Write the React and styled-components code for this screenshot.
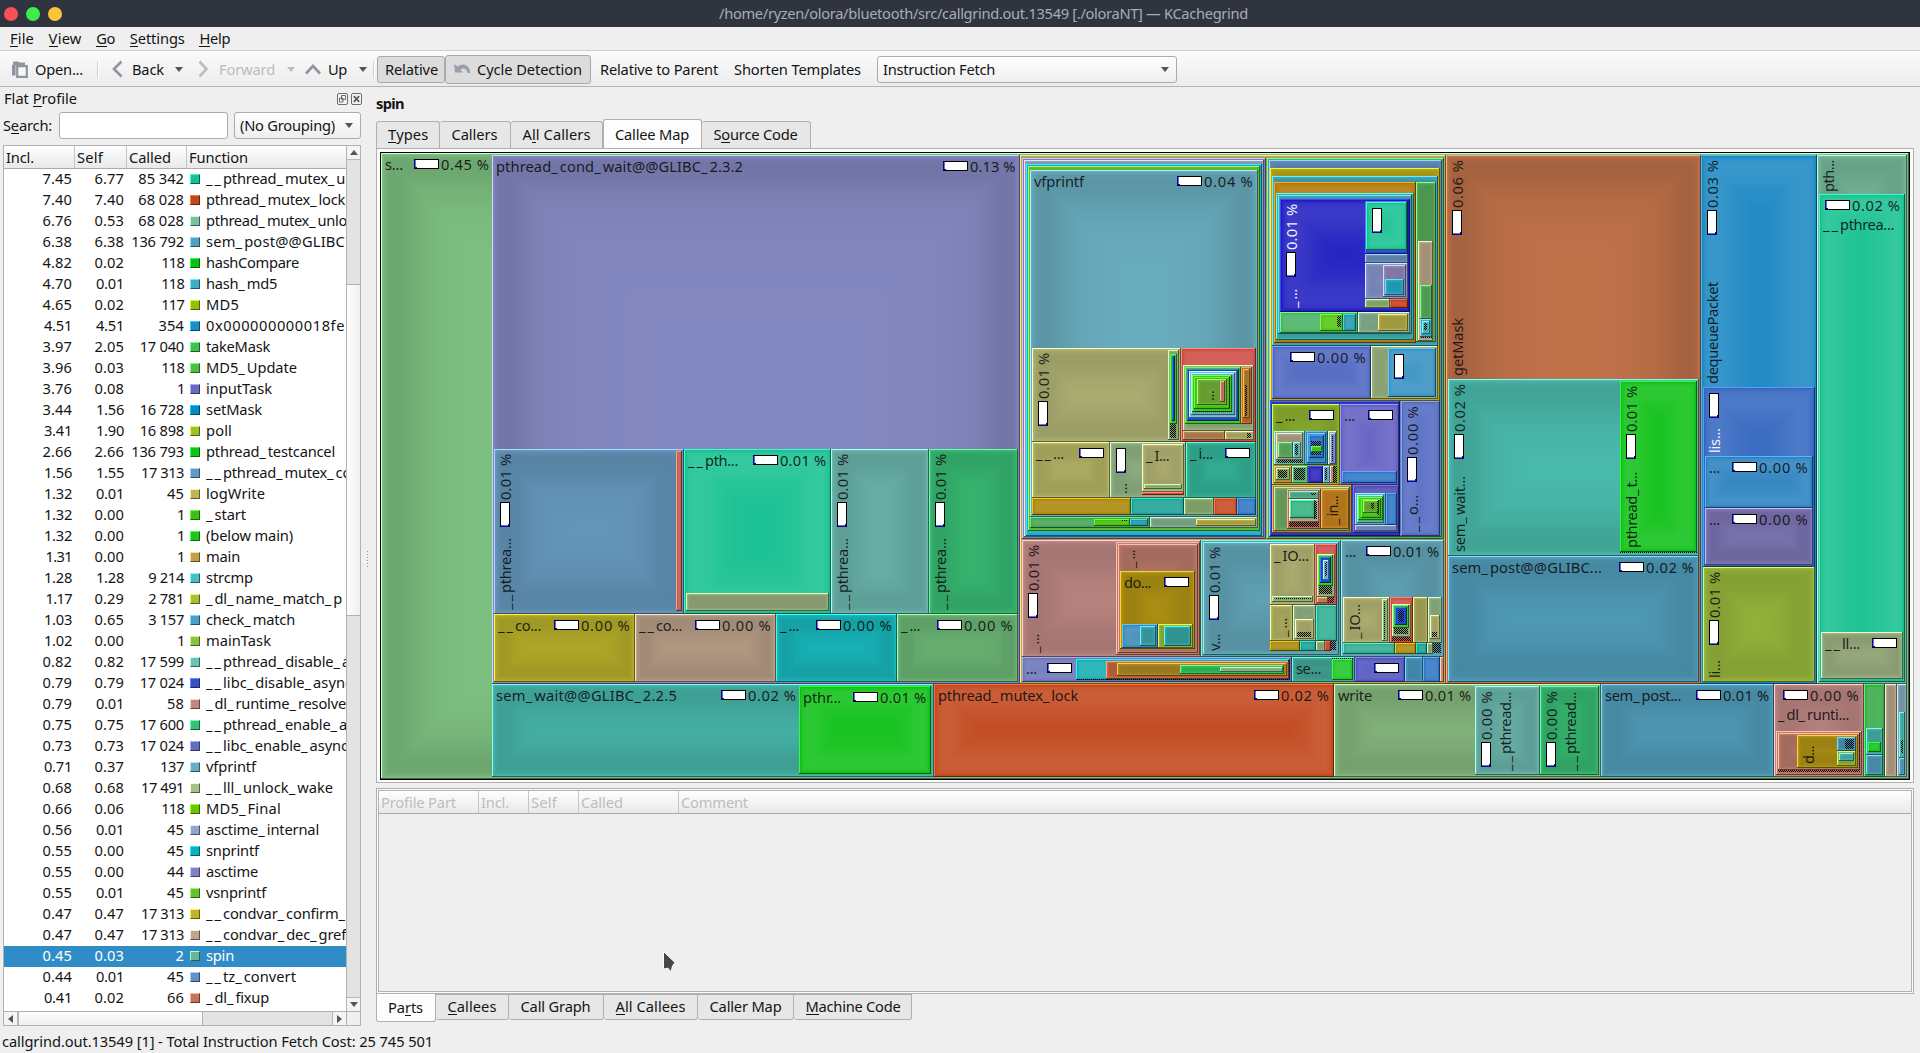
import React from 'react';
import styled, { createGlobalStyle, css } from 'styled-components';

const FONT = '"Noto Sans", "Open Sans", sans-serif';
const SIZE = 14.67;

const GlobalStyle = createGlobalStyle`
  * { box-sizing: border-box; }
  body { margin: 0; background: #efefef; overflow: hidden; }
  #root { font-family: ${FONT}; font-size: ${SIZE}px; color: #141414; }
`;

/* ---------- text with a known set width ---------- */

const UNDERSCORE_GAP = 2;
const ruler = document.createElement('canvas').getContext('2d');
const spacingFor = (text, width, weight = 400) => {
  ruler.font = `${weight} ${SIZE}px ${FONT}`;
  const scores = (text.match(/_/g) || []).length;
  const others = text.length - scores;
  return (width - ruler.measureText(text).width - scores * UNDERSCORE_GAP) / others;
};
const pieces = (text) => text.split(/(_+)/).filter(Boolean);

const Run = styled.span`
  display: inline-block;
  white-space: pre;
  font-weight: ${(p) => p.$weight || 400};
  flex: none;
`;
const Scores = styled.span`letter-spacing: ${UNDERSCORE_GAP}px;`;
const Mnemonic = styled.span`
  box-shadow: inset 0 -1px 0 currentColor;
  display: inline-block;
  line-height: 18px;
`;

const withScores = (text) => pieces(text).map((part, i) => (
  part[0] === '_' ? <Scores key={i}>{part}</Scores> : part
));

function Fit({ text, w, weight }) {
  const at = text.indexOf('&');
  const plain = text.replace('&', '');
  const style = { letterSpacing: `${spacingFor(plain, w, weight).toFixed(3)}px`, width: w + 1 };
  return (
    <Run $weight={weight} style={style}>
      {at < 0 ? withScores(plain) : (
        <>{plain.slice(0, at)}<Mnemonic>{plain[at]}</Mnemonic>{plain.slice(at + 1)}</>
      )}
    </Run>
  );
}

/* ---------- window chrome ---------- */

const Window = styled.div`
  width: 1920px; height: 1053px;
  display: flex; flex-direction: column;
  background: #efefef;
`;
const TitleBar = styled.header`
  height: 27px; flex: none;
  display: grid; grid-template-columns: 719px 1fr;
  align-items: center;
  background: #2f343f; color: #a6adbb;
  line-height: 27px;
`;
const Lights = styled.div`display: flex; gap: 8px; padding-left: 4px;`;
const Light = styled.i`
  width: 14px; height: 14px; border-radius: 50%;
  background: ${(p) => p.$color};
`;
const MenuBar = styled.nav`
  height: 24px; flex: none;
  display: flex; gap: 13.6px; padding-left: 10px;
  line-height: 23px;
  border-bottom: 1px solid #d0d0d0;
`;
const ToolBar = styled.div`
  height: 36px; flex: none; padding-top: 1px;
  display: flex; align-items: center;
  background: linear-gradient(#fbfbfb, #ececec);
  border-bottom: 1px solid #b4b4b4;
`;
const Tool = styled.div`
  display: flex; align-items: center; flex: none;
  width: ${(p) => p.$w}px; height: 28px; line-height: 28px;
  padding-left: ${(p) => p.$pad || 0}px;
  gap: ${(p) => p.$gap || 0}px;
  color: ${(p) => (p.$off ? '#bcbcbc' : '#141414')};
  ${(p) => p.$on && css`
    height: ${p.$h}px;
    background: #dcdcdc; border: 1px solid #a9a9a9; border-radius: 3px;
    line-height: 26px;
  `}
`;
const Separator = styled.i`
  width: 1px; height: 17px; background: #cfcfcf; flex: none;
  box-shadow: 1px 0 0 #fff;
  margin-right: ${(p) => p.$after}px;
`;
const Combo = styled.div`
  width: ${(p) => p.$w}px; height: 27px; flex: none;
  display: flex; align-items: center; justify-content: space-between;
  padding: 0 7px 0 5px;
  line-height: 25px;
  border: 1px solid #ababab; border-radius: 3px;
  background: linear-gradient(#fefefe, #efefef);
`;

const Arrow = styled.i`
  width: 0; height: 0; flex: none;
  margin-left: ${(p) => p.$shift || 0}px;
  border: 4px solid transparent;
  ${(p) => p.$dir === 'up' && css`border-bottom: 5px solid #555; border-top: 0;`}
  ${(p) => (!p.$dir || p.$dir === 'down') && css`border-top: 5px solid ${p.$color || '#555'}; border-bottom: 0;`}
  ${(p) => p.$dir === 'left' && css`border-right: 5px solid #555; border-left: 0;`}
  ${(p) => p.$dir === 'right' && css`border-left: 5px solid #555; border-right: 0;`}
`;

const Chevron = ({ d, w, h, color = '#9094a0' }) => (
  <svg width={w} height={h} viewBox={`0 0 ${w} ${h}`}>
    <path d={d} fill="none" stroke={color} strokeWidth="2.6" />
  </svg>
);
const OpenIcon = () => (
  <svg width="17" height="17" viewBox="0 0 17 17">
    <path d="M1 1.5 L1.6 .5 H6.5 L7.2 1.5 H13 V4 H1Z" fill="#9094a0" />
    <path d="M0 4H3.6V14.5H0Z" fill="#9094a0" />
    <path d="M5.2 5.2H14.8V15.8H5.2Z" fill="#f6f6f6" stroke="#9094a0" strokeWidth="2.2" />
  </svg>
);
const CycleIcon = () => (
  <svg width="17" height="12" viewBox="0 0 17 12">
    <path d="M0 1 L1 9.5 H9 L6.3 6.6 C9 4.6 12.5 5 13.6 10 H16.2 C16.2 3 10 -1.5 3.6 3.6 Z" fill="#9aa0aa" />
  </svg>
);
const FloatIcon = () => (
  <svg width="11" height="12" viewBox="0 0 11 12">
    <rect x=".5" y=".5" width="10" height="11" rx="1.5" fill="#f4f4f4" stroke="#6d6d6d" />
    <path d="M4.5 2.5H8.5V6.5H4.5Z M2.5 5H6V9H2.5Z" fill="none" stroke="#6d6d6d" />
  </svg>
);
const CloseIcon = () => (
  <svg width="11" height="12" viewBox="0 0 11 12">
    <rect x=".5" y=".5" width="10" height="11" rx="1.5" fill="#f4f4f4" stroke="#6d6d6d" />
    <path d="M2.8 3.2L8.2 8.8M8.2 3.2L2.8 8.8" stroke="#5a5a5a" strokeWidth="1.8" />
  </svg>
);

const Workspace = styled.main`
  flex: 1; min-height: 0;
  display: grid; grid-template-columns: 362px 14px 1538px;
  grid-template-rows: 940px;
`;
const StatusBar = styled.footer`
  height: 26px; flex: none; padding-left: 2px; line-height: 29px;
`;

/* ---------- flat profile dock ---------- */

const Dock = styled.section`display: flex; flex-direction: column; padding-left: 3px;`;
const DockTitle = styled.div`
  height: 25px; display: flex; align-items: center; gap: 3px; padding: 0 0 2px 1px;
  line-height: 23px;
  & > :first-child { margin-right: auto; }
`;
const SearchRow = styled.div`
  height: 33px; display: flex; align-items: flex-start; line-height: 27px;
`;
const SearchInput = styled.input`
  width: 169px; height: 27px; margin: 0 6px 0 6px;
  border: 1px solid #ababab; border-radius: 3px; background: #fff;
`;
const ProfileView = styled.div`
  width: 358px; height: 881px;
  display: grid; grid-template-columns: 342px 14px; grid-template-rows: 865px 14px;
  border: 1px solid #b2b2b2; background: #fff;
`;
const ProfileTable = styled.div`overflow: hidden;`;
const HeaderRow = styled.div`
  display: flex; height: 23px; line-height: 22px;
  background: linear-gradient(#fefefe, #e9e9e9);
  border-bottom: 1px solid #ababab;
  color: ${(p) => (p.$off ? '#bdbdbd' : '#141414')};
`;
const HeaderCell = styled.div`
  width: ${(p) => (p.$w ? `${p.$w}px` : 'auto')};
  flex: ${(p) => (p.$w ? 'none' : 1)};
  padding-left: 2px;
  border-right: ${(p) => (p.$w ? '1px solid #c6c6c6' : '0')};
`;
const Row = styled.div`
  display: grid; grid-template-columns: 68px 52px 60px 6px 10px 6px 1fr;
  align-items: start;
  height: 21px; line-height: 19px; overflow: hidden;
  background: ${(p) => (p.$selected ? '#308cc6' : 'transparent')};
  color: ${(p) => (p.$selected ? '#fff' : '#141414')};
`;
const Num = styled.div`text-align: right; display: flex; justify-content: flex-end; white-space: pre;`;
const Swatch = styled.i`
  grid-column: 5; width: 10px; height: 10px; margin-top: 5px;
  background: ${(p) => p.$color};
  border: 1px solid; border-color: ${(p) => `${p.$hi} ${p.$lo} ${p.$lo} ${p.$hi}`};
`;
const FnName = styled.div`grid-column: 7; overflow: hidden; white-space: pre; height: 21px;`;

const VScroll = styled.div`
  display: grid; grid-template-rows: 14px 124px 332px 381px 14px;
  border-left: 1px solid #b2b2b2; background: #e3e3e3;
`;
const HScroll = styled.div`
  display: grid; grid-template-columns: 14px 185px 129px 14px;
  border-top: 1px solid #b2b2b2; background: #e3e3e3;
`;
const ScrollButton = styled.div`
  display: flex; align-items: center; justify-content: center;
  background: #f4f4f4;
  border: 0 solid #b9b9b9;
  border-width: ${(p) => p.$edge};
`;
const Thumb = styled.div`
  background: linear-gradient(${(p) => (p.$vertical ? '90deg' : '180deg')}, #fdfdfd, #f0f0f0);
  border: 0 solid #b2b2b2;
  border-width: ${(p) => (p.$vertical ? '1px 0' : '0 1px')};
`;
const Corner = styled.div`background: #efefef; border: 1px solid #b2b2b2; border-width: 1px 0 0 1px;`;

const Splitter = styled.div`
  padding: 464px 0 0 5px;
  i { display: block; width: 1px; height: 1px; margin-bottom: 2px; background: #999; }
`;

/* ---------- right side ---------- */

const Views = styled.section`display: flex; flex-direction: column;`;
const FunctionTitle = styled.h1`
  margin: 0; height: 32px; line-height: 33px; font-size: inherit; font-weight: 700;
`;
const Tabs = styled.div`
  display: flex; height: 29px; flex: none;
  align-items: ${(p) => (p.$bottom ? 'flex-start' : 'flex-end')};
`;
const Tab = styled.div`
  width: ${(p) => p.$w}px; flex: none;
  height: ${(p) => (p.$active ? 28 : 26)}px;
  padding-left: ${(p) => (p.$active || p.$first ? 11 : 11.5)}px;
  border: 1px solid #b0b0b0; border-left-width: ${(p) => (p.$active || p.$first ? 1 : 0)}px;
  background: ${(p) => (p.$active ? '#fdfdfd' : '#e7e7e7')};
  ${(p) => (p.$bottom
    ? css`border-top-width: ${p.$active ? 0 : 1}px; border-radius: 0 0 3px 3px; line-height: ${p.$active ? 27 : 23}px;`
    : css`border-bottom-width: ${p.$active ? 0 : 1}px; border-radius: 3px 3px 0 0; line-height: ${p.$active ? 29 : 25}px;
      ${p.$active && 'margin-bottom: -1px; height: 30px;'}
      ${!p.$active && 'height: 27px; border-bottom-width: 0;'}`)}
`;
const TopPanel = styled.div`
  height: 635px; padding: 3px; flex: none;
  border: 1px solid #b0b0b0;
  background: #fbfbfb;
`;
const BottomPanel = styled.div`
  height: 206px; margin-top: 5px; padding: 1px; flex: none;
  border: 1px solid #b0b0b0; background: #fbfbfb;
`;
const PartsTable = styled.div`height: 202px; border: 1px solid #b2b2b2; background: #efefef;`;

const Pointer = styled.svg`position: absolute; left: 661px; top: 950px;`;

/* ---------- colour helpers ---------- */

const rgb = (hex) => [1, 3, 5].map((i) => parseInt(hex.slice(i, i + 2), 16));
const toCss = (c) => `rgb(${c.map((v) => Math.max(0, Math.min(255, Math.round(v)))).join(',')})`;

const lighter = (hex) => {
  const c = rgb(hex);
  const max = Math.max(...c) || 1;
  const v = max * 1.5;
  if (v <= 255) return toCss(c.map((x) => x * 1.5));
  const sat = Math.max(0, 1 - Math.min(...c) / max - (v - 255) / 255);
  const oldSat = 1 - Math.min(...c) / max || 1;
  return toCss(c.map((x) => 255 * (1 - (1 - x / max) * (sat / oldSat))));
};
const darker = (hex) => toCss(rgb(hex).map((x) => x / 2));

const shades = (hex, w, h) => {
  const base = rgb(hex);
  const dark = (base[0] * 11 + base[1] * 16 + base[2] * 5) / 32 > 128;
  const diff = base.map((v) => (dark ? -v / 7 : (255 - v) / 7));
  const s = Math.min(w, h);
  let factor = 0.1; let forth = 0.7; let back1 = 0.9; let back2 = 0.97;
  if (s < 100) {
    forth -= (0.3 * (100 - s)) / 100;
    back1 -= (0.2 * (100 - s)) / 100;
    back2 -= (0.02 * (100 - s)) / 100;
  }
  const out = [];
  let phase = 0;
  for (let i = 0; i * 2 < s; i += 1) {
    const color = toCss(base.map((v, k) => v + factor * diff[k]));
    if (!out.length || out[out.length - 1].color !== color) out.push({ i, color });
    if (phase === 0) {
      factor = 1 - (1 - factor) * forth;
      if (factor >= 0.95) phase = 1;
    } else if (phase === 1) {
      factor = 1 - (1 - factor) / back1;
      if (factor <= 0.7) phase = 2;
    } else {
      factor *= back2;
      if (factor <= 0.01) break;
    }
  }
  return out;
};

/* ---------- callee tree map ---------- */

const MapSvg = styled.svg`display: block; background: #000;`;
const MapText = styled.text`
  font-family: ${FONT};
  font-size: ${SIZE}px;
  fill: ${(p) => (p.$light ? '#f4f4ff' : '#0c0c0c')};
  fill-opacity: ${(p) => (p.$light ? 1 : 0.88)};
  white-space: pre;
`;
const CostBox = styled.rect`fill: #fff; stroke: #000; stroke-width: 1px;`;

function MapLabel({ x, y, text, w, light }) {
  const gap = spacingFor(text, w);
  return (
    <MapText x={x} y={y} $light={light}>
      {pieces(text).map((part, i) => (
        <tspan key={i} style={{ letterSpacing: `${(part[0] === '_' ? UNDERSCORE_GAP : gap).toFixed(3)}px` }}>{part}</tspan>
      ))}
    </MapText>
  );
}

const pctWidth = (p) => ({ '0.00': 49, '0.04': 49, '0.01': 46, '0.13': 45 }[p] || 48);

function Labels({ box, o }) {
  const [x0, y0, x1, y1] = box;
  const right = o.v ? y0 : (o.lx || x1);
  const length = o.v ? (o.ly || y1) - y0 : right - x0;
  const pw = o.p ? pctWidth(o.p) : 0;
  const barAt = o.p ? length - 81 + (49 - pw) : length - 31;
  const transform = o.v ? `translate(${x0} ${o.ly || y1}) rotate(-90)` : `translate(${x0} ${y0})`;
  return (
    <g transform={transform}>
      {o.n && <MapLabel x={4} y={o.l2 ? 36 : 17} text={o.n} w={o.w} light={o.light} />}
      {(o.p || o.bar) && (
        <g>
          <CostBox x={barAt + 0.5} y={6.5} width={24} height={9} />
          <path d={`M${barAt + 1.5} 7V15`} stroke="#6a6af0" />
          <path d={`M${barAt + 1} 14.5h2M${barAt + 0.5} 6.5v9`} stroke="#0a0a78" />
        </g>
      )}
      {o.p && <MapLabel x={barAt + 27} y={17} text={`${o.p} %`} w={pw + 0.5} light={o.light} />}
    </g>
  );
}

function Cell({ box, color, o }) {
  const [x0, y0, x1, y1] = box;
  if (color === 'hatch') {
    return <rect x={x0} y={y0} width={x1 - x0} height={y1 - y0} fill="url(#dense)" />;
  }
  const w = x1 - x0; const h = y1 - y0;
  return (
    <g>
      <rect x={x0} y={y0} width={w} height={h} fill={lighter(color)} />
      <path d={`M${x1} ${y0}V${y1}H${x0}V${y1 - 1}H${x1 - 1}V${y0}Z`} fill={darker(color)} />
      {shades(color, w - 2, h - 2).map(({ i, color: c }) => (
        <rect key={i} x={x0 + 1 + i} y={y0 + 1 + i} width={Math.max(0, w - 2 - 2 * i)} height={Math.max(0, h - 2 - 2 * i)} fill={c} />
      ))}
      {o && <Labels box={box} o={o} />}
    </g>
  );
}

const H = 'hatch';
const CELLS = [
  [381, 153, 1909, 779, '#7ec182', { n: 's...', w: 18, p: '0.45', lx: 494 }],
  // pthread_cond_wait
  [492, 155, 1020, 684, '#8488c0', { n: 'pthread_cond_wait@@GLIBC_2.3.2', w: 247, p: '0.13' }],
  [494, 449, 684, 614, '#6699bf', { n: '__pthrea...', w: 72, p: '0.01', v: 1 }],
  [676, 451, 682, 611, '#c05f50'],
  [684, 449, 831, 614, '#14c090', { n: '__pth...', w: 50, p: '0.01' }],
  [686, 593, 829, 611, '#9cb080'],
  [831, 449, 929, 614, '#6cb8ae', { n: '__pthrea...', w: 72, p: '0.01', v: 1 }],
  [929, 449, 1018, 614, '#38bc74', { n: '__pthrea...', w: 72, p: '0.01', v: 1 }],
  [494, 614, 635, 682, '#b8b02a', { n: '__co...', w: 43, p: '0.00' }],
  [635, 614, 776, 682, '#baa088', { n: '__co...', w: 43, p: '0.00' }],
  [776, 614, 897, 682, '#18babe', { n: '_...', w: 19, p: '0.00' }],
  [897, 614, 1018, 682, '#6cb876', { n: '_...', w: 19, p: '0.00' }],
  // sem_wait, pthread_mutex_lock
  [492, 684, 934, 777, '#48b8ac', { n: 'sem_wait@@GLIBC_2.2.5', w: 181, p: '0.02', lx: 801 }],
  [799, 686, 931, 774, '#0cc014', { n: 'pthr...', w: 38, p: '0.01' }],
  [934, 684, 1334, 777, '#c04418', { n: 'pthread_mutex_lock', w: 140, p: '0.02' }],
  // write
  [1334, 684, 1601, 777, '#88ba80', { n: 'write', w: 34, p: '0.01', lx: 1476 }],
  [1475, 686, 1540, 775, '#6cb8ae', { n: '__pthread...', w: 79, p: '0.00', v: 1, l2: 1 }],
  [1540, 686, 1599, 775, '#38bc74', { n: '__pthread...', w: 79, p: '0.00', v: 1, l2: 1 }],
  [1601, 684, 1774, 777, '#519ebc', { n: 'sem_post...', w: 76, p: '0.01' }],
  // _dl_runtime_resolve
  [1774, 684, 1864, 777, '#bf8884', { n: '_dl_runti...', w: 71, p: '0.00', l2: 1 }],
  [1776, 731, 1862, 775, '#c87c64'],
  [1778, 733, 1860, 770, '#bc7c6c'],
  [1778, 770, 1860, 772, H],
  [1859, 733, 1860, 772, H],
  [1797, 735, 1858, 768, '#b49614', { n: 'd...', w: 18, v: 1 }],
  [1837, 737, 1856, 751, '#489ac0'],
  [1845, 739, 1854, 749, H],
  [1837, 751, 1856, 766, '#98b834'],
  [1839, 753, 1854, 761, '#48b4b4'],
  [1864, 684, 1885, 777, '#35a845'],
  [1866, 728, 1883, 755, '#48b4a8'],
  [1868, 742, 1881, 752, '#10c418'],
  [1866, 755, 1883, 775, '#519ebc'],
  [1885, 684, 1897, 777, '#bca68c'],
  [1897, 684, 1907, 777, '#86a8b8'],
  [1899, 712, 1905, 758, '#48b8ac'],
  [1901, 740, 1903, 753, H],
  [1899, 758, 1905, 775, '#519ebc'],
  // getMask
  [1446, 155, 1701, 684, '#c0724a', { n: 'getMask', w: 58, p: '0.06', v: 1, ly: 380 }],
  [1448, 379, 1699, 556, '#4abdae', { n: 'sem_wait...', w: 76, p: '0.02', v: 1 }],
  [1620, 381, 1697, 552, '#0cc014', { n: 'pthread_t...', w: 76, p: '0.01', v: 1 }],
  [1620, 552, 1697, 553, H],
  [1448, 556, 1699, 682, '#519ebc', { n: 'sem_post@@GLIBC...', w: 150, p: '0.02' }],
  // dequeuePacket
  [1701, 155, 1817, 684, '#1886c2', { n: 'dequeuePacket', w: 102, p: '0.03', v: 1, ly: 388 }],
  [1703, 387, 1815, 567, '#3064bf', { n: 'lis...', w: 25, bar: 1, v: 1, ly: 457, light: 1 }],
  [1705, 456, 1813, 508, '#2880c0', { n: '...', w: 11, p: '0.00' }],
  [1705, 508, 1813, 565, '#8078b8', { n: '...', w: 11, p: '0.00' }],
  [1703, 567, 1815, 682, '#9aba3c', { n: 'li...', w: 18, p: '0.01', v: 1 }],
  // pthread_mutex_unlock
  [1817, 155, 1907, 684, '#78bc9e', { n: 'pth...', w: 32, v: 1, ly: 196 }],
  [1819, 194, 1905, 682, '#14c090', { n: '__pthrea...', w: 71, p: '0.02', l2: 1 }],
  [1821, 632, 1903, 679, '#a0b484', { n: '__ll...', w: 35, bar: 1 }],
  // logWrite group
  [1020, 155, 1446, 684, '#bca858'],
  [1022, 158, 1266, 539, '#8080bf'],
  [1024, 160, 1264, 537, '#8fa2c0'],
  [1026, 164, 1262, 536, '#11b0cc'],
  [1028, 166, 1260, 531, '#65bf35'],
  [1030, 170, 1258, 517, '#6aaec0', { n: 'vfprintf', w: 50, p: '0.04' }],
  [1032, 348, 1181, 442, '#b2b676', { p: '0.01', v: 1, ly: 442 }],
  [1168, 350, 1179, 440, '#90b078'],
  [1170, 354, 1177, 424, '#2cc41a'],
  [1172, 356, 1175, 421, '#1340b8'],
  [1170, 424, 1176, 438, H],
  [1181, 348, 1256, 442, '#cc4840'],
  [1183, 365, 1254, 431, '#98b880'],
  [1185, 367, 1241, 424, '#35c81c'],
  [1187, 369, 1239, 421, '#1040cc'],
  [1189, 371, 1237, 418, '#7cc0d8'],
  [1191, 373, 1235, 415, '#60b8c0'],
  [1192, 375, 1232, 412, '#3fce1e'],
  [1194, 377, 1230, 409, '#38c010'],
  [1194, 411, 1232, 412, H],
  [1229, 377, 1230, 409, H],
  [1197, 379, 1227, 405, '#74b438', { n: '...', w: 10.5, v: 1 }],
  [1220, 381, 1225, 402, '#c07860'],
  [1241, 367, 1252, 424, '#c8682f'],
  [1243, 369, 1250, 418, '#b08030'],
  [1245, 385, 1247, 416, H],
  [1183, 431, 1225, 440, '#b88858'],
  [1225, 431, 1254, 440, '#b8b470'],
  [1247, 433, 1251, 438, H],
  [1032, 442, 1110, 498, '#b8b868', { n: '__...', w: 28, bar: 1 }],
  [1110, 442, 1186, 498, '#94b888', { n: '...', w: 11, bar: 1, v: 1 }],
  [1142, 444, 1184, 492, '#b8b878', { n: '_I...', w: 23 }],
  [1144, 484, 1182, 489, '#90b878'],
  [1142, 492, 1184, 495, '#e03838'],
  [1186, 442, 1256, 498, '#34b89c', { n: '_i...', w: 23, bar: 1 }],
  [1032, 498, 1131, 515, '#a88404'],
  [1131, 498, 1184, 515, '#18a094'],
  [1184, 498, 1214, 515, '#90b478'],
  [1214, 498, 1237, 515, '#c44820'],
  [1237, 498, 1256, 515, '#2c74c4'],
  [1030, 517, 1150, 528, '#40a450'],
  [1094, 519, 1130, 526, '#44c008'],
  [1122, 520, 1128, 521, H],
  [1130, 519, 1148, 526, '#2098a8'],
  [1150, 517, 1258, 528, '#84b494'],
  [1196, 519, 1256, 526, '#b8b048'],
  // asctime / tz group
  [1267, 158, 1444, 539, '#46b468'],
  [1269, 160, 1442, 537, '#6090c0'],
  [1270, 168, 1440, 401, '#b8a81c'],
  [1272, 176, 1438, 346, '#40a8b8'],
  [1274, 182, 1416, 343, '#b47404'],
  [1276, 193, 1414, 340, '#38b0ac'],
  [1278, 195, 1412, 334, '#40a4b8'],
  [1280, 199, 1410, 312, '#1c1abf', { n: '_...', w: 19, p: '0.01', v: 1, light: 1 }],
  [1365, 201, 1408, 254, '#2040c8'],
  [1366, 202, 1407, 250, '#14c090', { bar: 1, v: 1 }],
  [1365, 254, 1408, 263, '#6890c0'],
  [1365, 263, 1408, 299, '#8898d0'],
  [1383, 265, 1406, 297, '#9488bc'],
  [1385, 279, 1404, 295, '#28acc8'],
  [1365, 299, 1390, 308, '#90b878'],
  [1390, 299, 1408, 308, '#c83c18'],
  [1280, 312, 1358, 333, '#44b060'],
  [1320, 314, 1343, 331, '#50c410'],
  [1337, 316, 1341, 327, H],
  [1343, 314, 1356, 331, '#2098a8'],
  [1358, 312, 1410, 333, '#8cb898'],
  [1378, 314, 1408, 331, '#b8b048'],
  [1416, 182, 1436, 342, '#58ae5c'],
  [1418, 241, 1433, 341, '#bca888'],
  [1420, 285, 1432, 319, '#58b05c'],
  [1420, 319, 1432, 337, '#48a8c0'],
  [1422, 321, 1430, 334, '#48c0c0'],
  [1424, 323, 1427, 330, H],
  [1420, 337, 1432, 338, H],
  [1272, 346, 1371, 399, '#4c64c0', { p: '0.00' }],
  [1371, 346, 1438, 399, '#a0b884'],
  [1388, 348, 1436, 397, '#3490c2', { bar: 1, v: 1 }],
  [1270, 401, 1400, 536, '#1c30c4'],
  [1272, 404, 1340, 485, '#90b430', { n: '_...', w: 19, bar: 1 }],
  [1274, 431, 1305, 465, '#6cbcac'],
  [1276, 433, 1303, 460, '#b8a888'],
  [1278, 442, 1293, 458, '#64b468'],
  [1293, 442, 1301, 458, '#58c0c0'],
  [1295, 444, 1298, 455, H],
  [1277, 460, 1303, 463, H],
  [1305, 431, 1328, 465, '#3088b8'],
  [1307, 433, 1326, 463, '#3c98d0'],
  [1309, 435, 1324, 458, '#2068c0'],
  [1311, 441, 1321, 455, H],
  [1311, 446, 1322, 452, '#40d018'],
  [1328, 431, 1337, 465, '#98b888'],
  [1330, 433, 1336, 464, '#7890d0'],
  [1332, 436, 1333, 462, H],
  [1274, 466, 1292, 483, '#c89040'],
  [1276, 468, 1290, 480, '#84b868'],
  [1278, 470, 1287, 478, H],
  [1292, 466, 1308, 483, '#64c084'],
  [1294, 468, 1305, 480, H],
  [1308, 466, 1323, 483, '#2820b8'],
  [1323, 466, 1330, 483, '#64b4d0'],
  [1325, 468, 1327, 480, H],
  [1330, 466, 1334, 483, '#d08078'],
  [1333, 466, 1337, 483, H],
  [1340, 404, 1399, 485, '#605cc0', { n: '...', w: 11, bar: 1 }],
  [1342, 471, 1397, 483, '#2c74c4'],
  [1272, 485, 1352, 533, '#c87430'],
  [1274, 487, 1350, 531, '#70b068'],
  [1287, 489, 1321, 529, '#c86c58'],
  [1289, 491, 1319, 499, '#54b898'],
  [1311, 493, 1316, 495, H],
  [1289, 499, 1319, 522, '#b8ac88'],
  [1290, 500, 1315, 518, '#30b07c'],
  [1314, 501, 1317, 519, H],
  [1289, 522, 1319, 527, H],
  [1321, 489, 1349, 529, '#cc8420', { n: '_in...', w: 29, v: 1 }],
  [1353, 485, 1399, 533, '#4c48b4'],
  [1355, 493, 1386, 525, '#50b8c8'],
  [1357, 495, 1384, 523, '#68b0a0'],
  [1358, 497, 1383, 520, '#38c820'],
  [1361, 499, 1381, 518, '#30c008'],
  [1363, 500, 1379, 513, '#70b438'],
  [1371, 503, 1374, 509, H],
  [1377, 500, 1379, 515, H],
  [1386, 493, 1397, 525, '#2c74c4'],
  [1355, 525, 1397, 531, '#7890c8'],
  [1401, 401, 1440, 536, '#5068c0', { n: '__o...', w: 37, p: '0.00', v: 1 }],
  // lower middle band
  [1022, 540, 1201, 657, '#bf8884', { n: '_...', w: 19, p: '0.01', v: 1 }],
  [1116, 542, 1200, 655, '#c87c64'],
  [1118, 544, 1198, 653, '#bc7c6c', { n: '_...', w: 18, v: 1, ly: 572 }],
  [1120, 571, 1195, 649, '#b49614', { n: 'do...', w: 27, bar: 1 }],
  [1122, 624, 1158, 648, '#3888b4'],
  [1140, 626, 1156, 646, '#40a8b4'],
  [1158, 624, 1193, 648, '#98b834'],
  [1164, 626, 1191, 646, '#38a8a8'],
  [1201, 540, 1341, 657, '#48b4a0'],
  [1203, 542, 1339, 655, '#64a8bc', { n: 'v...', w: 17, p: '0.01', v: 1 }],
  [1270, 544, 1315, 605, '#b8b878', { n: '_IO...', w: 35 }],
  [1272, 596, 1313, 602, '#90b878'],
  [1275, 598, 1311, 599, H],
  [1315, 544, 1337, 605, '#cc4840'],
  [1317, 554, 1335, 597, '#98b880'],
  [1318, 555, 1333, 586, '#2cc41a'],
  [1320, 557, 1331, 583, '#1040cc'],
  [1323, 560, 1329, 580, '#70b8d8'],
  [1325, 562, 1327, 576, H],
  [1319, 586, 1332, 594, H],
  [1317, 597, 1328, 603, '#c08c60'],
  [1328, 597, 1334, 603, H],
  [1270, 605, 1293, 641, '#b8b868', { n: '_...', w: 19, v: 1 }],
  [1293, 605, 1316, 641, '#94b888'],
  [1295, 619, 1314, 639, '#b8b878'],
  [1297, 632, 1311, 637, H],
  [1316, 605, 1337, 641, '#2cac90'],
  [1270, 641, 1300, 651, '#a88808'],
  [1300, 641, 1316, 651, '#18a094'],
  [1316, 641, 1325, 651, '#90b478'],
  [1325, 641, 1331, 651, '#c44020'],
  [1331, 641, 1336, 650, H],
  [1341, 540, 1444, 657, '#64a8bc', { n: '...', w: 11, p: '0.01' }],
  [1343, 597, 1390, 643, '#b8b878', { n: '_IO...', w: 35, v: 1 }],
  [1382, 599, 1388, 641, '#90b878'],
  [1384, 601, 1385, 639, H],
  [1390, 597, 1413, 643, '#cc4840'],
  [1392, 604, 1411, 637, '#98b880'],
  [1393, 605, 1409, 628, '#2cc41a'],
  [1395, 607, 1407, 625, '#1040cc'],
  [1398, 610, 1404, 622, H],
  [1394, 628, 1408, 634, H],
  [1392, 637, 1411, 641, H],
  [1413, 597, 1428, 643, '#b0b060'],
  [1428, 597, 1442, 643, '#94b888'],
  [1430, 615, 1440, 639, '#b8b878'],
  [1432, 632, 1437, 637, H],
  [1343, 643, 1395, 654, '#2cac90'],
  [1395, 643, 1416, 654, '#a88808'],
  [1416, 643, 1427, 654, '#18a094'],
  [1427, 643, 1433, 654, '#90b478'],
  [1433, 643, 1441, 653, H],
  [1022, 657, 1292, 682, '#6872b8', { n: '...', w: 11, bar: 1, lx: 1078 }],
  [1076, 659, 1290, 680, '#10acb0'],
  [1288, 660, 1290, 680, H],
  [1076, 679, 1290, 680, H],
  [1106, 661, 1289, 679, '#cc6840'],
  [1117, 663, 1287, 676, '#b08c24'],
  [1180, 665, 1284, 674, '#34c45c'],
  [1220, 667, 1283, 672, '#84b884'],
  [1292, 657, 1355, 682, '#44ac9c', { n: 'se...', w: 25 }],
  [1332, 659, 1353, 680, '#1cc424'],
  [1332, 658, 1353, 659, H],
  [1355, 657, 1405, 682, '#4c50c0', { bar: 1 }],
  [1405, 657, 1423, 682, '#489ac0'],
  [1423, 657, 1440, 682, '#2c74c4'],
  [1440, 657, 1444, 682, '#d08c70'],
];

const TreeMap = () => (
  <MapSvg width="1530" height="628" viewBox="380 152 1530 628">
    <defs>
      <pattern id="dense" width="2" height="2" patternUnits="userSpaceOnUse">
        <path d="M0 0h1v1h-1zM1 1h1v1h-1z" fill="#000" />
      </pattern>
    </defs>
    {CELLS.map(([x0, y0, x1, y1, color, o]) => (
      <Cell key={`${x0}.${y0}.${x1}.${y1}`} box={[x0, y0, x1, y1]} color={color} o={o} />
    ))}
  </MapSvg>
);

/* ---------- flat profile data ---------- */

const PROFILE = [
  ['7.45', '6.77', '85 342', '#18c094', '__pthread_mutex_un', 148],
  ['7.40', '7.40', '68 028', '#c04818', 'pthread_mutex_lock', 139],
  ['6.76', '0.53', '68 028', '#78c0a0', 'pthread_mutex_unlo', 141],
  ['6.38', '6.38', '136 792', '#54a0c0', 'sem_post@@GLIBC', 139],
  ['4.82', '0.02', '118', '#08c018', 'hashCompare', 93],
  ['4.70', '0.01', '118', '#40acc0', 'hash_md5', 71],
  ['4.65', '0.02', '117', '#90c010', 'MD5', 33],
  ['4.51', '4.51', '354', '#1890c4', '0x000000000018fe', 139],
  ['3.97', '2.05', '17 040', '#40c050', 'takeMask', 64],
  ['3.96', '0.03', '118', '#4cc040', 'MD5_Update', 91],
  ['3.76', '0.08', '1', '#686cc0', 'inputTask', 66],
  ['3.44', '1.56', '16 728', '#008cc4', 'setMask', 56],
  ['3.41', '1.90', '16 898', '#a4c028', 'poll', 26],
  ['2.66', '2.66', '136 793', '#10c41c', 'pthread_testcancel', 129],
  ['1.56', '1.55', '17 313', '#6498c0', '__pthread_mutex_co', 145],
  ['1.32', '0.01', '45', '#c0b458', 'logWrite', 59],
  ['1.32', '0.00', '1', '#3cc014', '_start', 40],
  ['1.32', '0.00', '1', '#20c41c', '(below main)', 87],
  ['1.31', '0.00', '1', '#c0a04c', 'main', 34],
  ['1.28', '1.28', '9 214', '#48c0c0', 'strcmp', 47],
  ['1.17', '0.29', '2 781', '#a4c034', '_dl_name_match_p', 136],
  ['1.03', '0.65', '3 157', '#48a0c4', 'check_match', 89],
  ['1.02', '0.00', '1', '#90c040', 'mainTask', 65],
  ['0.82', '0.82', '17 599', '#6cc0b4', '__pthread_disable_a', 144],
  ['0.79', '0.79', '17 024', '#3850c4', '__libc_disable_async', 146],
  ['0.79', '0.01', '58', '#c08884', '_dl_runtime_resolve', 140],
  ['0.75', '0.75', '17 600', '#38c078', '__pthread_enable_a', 141],
  ['0.73', '0.73', '17 024', '#646cc0', '__libc_enable_async', 142],
  ['0.71', '0.37', '137', '#68acc0', 'vfprintf', 50],
  ['0.68', '0.68', '17 491', '#a8c088', '__lll_unlock_wake', 127],
  ['0.66', '0.06', '118', '#6cc400', 'MD5_Final', 75],
  ['0.56', '0.01', '45', '#90a4c4', 'asctime_internal', 113],
  ['0.55', '0.00', '45', '#08b0c4', 'snprintf', 53],
  ['0.55', '0.00', '44', '#8080c4', 'asctime', 52],
  ['0.55', '0.01', '45', '#64c034', 'vsnprintf', 60],
  ['0.47', '0.47', '17 313', '#c0b428', '__condvar_confirm_', 141],
  ['0.47', '0.47', '17 313', '#c0a48c', '__condvar_dec_gref', 140],
  ['0.45', '0.03', '2', '#68b494', 'spin', 28, true],
  ['0.44', '0.01', '45', '#6090c4', '__tz_convert', 90],
  ['0.41', '0.02', '66', '#c4745c', '_dl_fixup', 63],
];

const ADVANCE = { 1: 7.1, '.': 3.9, ' ': 3.2 };
const numberWidth = (s) => [...s].reduce((sum, ch) => sum + (ADVANCE[ch] || 8.5), 0);
const NumCell = ({ value }) => <Num><Fit text={value} w={numberWidth(value)} /></Num>;

const TOP_TABS = [['&Types', 64, 40], ['Callers', 71, 46], ['A&ll Callers', 92, 68], ['Callee Map', 99, 74, true], ['S&ource Code', 109, 84]];
const BOTTOM_TABS = [['Pa&rts', 60, 35, true], ['&Callees', 73, 49], ['Call Graph', 95, 70], ['&All Callees', 94, 70], ['Caller Map', 96, 72], ['&Machine Code', 118, 95]];

export default function App() {
  return (
    <Window>
      <GlobalStyle />
      <TitleBar>
        <Lights><Light $color="#f94f58" /><Light $color="#3dee48" /><Light $color="#fcc438" /></Lights>
        <Fit text="/home/ryzen/olora/bluetooth/src/callgrind.out.13549 [./oloraNT] — KCachegrind" w={529} />
      </TitleBar>
      <MenuBar>
        <Fit text="&File" w={24} /><Fit text="&View" w={33} /><Fit text="&Go" w={19} />
        <Fit text="&Settings" w={55} /><Fit text="&Help" w={31} />
      </MenuBar>
      <ToolBar>
        <Tool $w={97} $pad={12} $gap={6}><OpenIcon /><Fit text="Open..." w={48} /></Tool>
        <Separator $after={13} />
        <Tool $w={87} $pad={1} $gap={9}>
          <Chevron w={11} h={18} d="M9.5 1.5L2 9L9.5 16.5" /><Fit text="Back" w={32} /><Arrow $shift={1} />
        </Tool>
        <Tool $w={107} $gap={10} $off>
          <Chevron w={11} h={18} d="M1.5 1.5L8.5 9L1.5 16.5" color="#bbbdc3" /><Fit text="Forward" w={56} /><Arrow $color="#bcbcbc" $shift={1} />
        </Tool>
        <Tool $w={68} $gap={7}>
          <Chevron w={16} h={12} d="M1 10.5L8 3L15 10.5" /><Fit text="Up" w={19} /><Arrow $shift={4} />
        </Tool>
        <Separator $after={3} />
        <Tool $w={68} $h={27} $pad={7} $on><Fit text="Relative" w={53} /></Tool>
        <Separator as="span" $after={0} hidden />
        <Tool $w={146} $h={29} $pad={8} $gap={6} $on><CycleIcon /><Fit text="Cycle Detection" w={105} /></Tool>
        <Tool $w={134} $pad={9}><Fit text="Relative to Parent" w={118} /></Tool>
        <Tool $w={152} $pad={9}><Fit text="Shorten Templates" w={127} /></Tool>
        <Combo $w={300}><Fit text="Instruction Fetch" w={112} /><Arrow /></Combo>
      </ToolBar>

      <Workspace>
        <Dock>
          <DockTitle><Fit text="Flat &Profile" w={73} /><FloatIcon /><CloseIcon /></DockTitle>
          <SearchRow>
            <Fit text="S&earch:" w={49} />
            <SearchInput aria-label="Search" />
            <Combo $w={127}><Fit text="(No Grouping)" w={95} /><Arrow /></Combo>
          </SearchRow>
          <ProfileView>
            <ProfileTable>
              <HeaderRow>
                <HeaderCell $w={71}><Fit text="Incl." w={28} /></HeaderCell>
                <HeaderCell $w={52}><Fit text="Self" w={26} /></HeaderCell>
                <HeaderCell $w={60}><Fit text="Called" w={42} /></HeaderCell>
                <HeaderCell><Fit text="Function" w={59} /></HeaderCell>
              </HeaderRow>
              {PROFILE.map(([incl, self, called, color, name, w, selected]) => (
                <Row key={name} $selected={selected}>
                  <NumCell value={incl} /><NumCell value={self} /><NumCell value={called} />
                  <Swatch $color={color} $hi={lighter(color)} $lo={darker(color)} />
                  <FnName><Fit text={name} w={w} /></FnName>
                </Row>
              ))}
            </ProfileTable>
            <VScroll>
              <ScrollButton $edge="0 0 1px 0"><Arrow $dir="up" /></ScrollButton>
              <i /><Thumb $vertical /><i />
              <ScrollButton $edge="1px 0 0 0"><Arrow /></ScrollButton>
            </VScroll>
            <HScroll>
              <ScrollButton $edge="0 1px 0 0"><Arrow $dir="left" /></ScrollButton>
              <Thumb /><i />
              <ScrollButton $edge="0 0 0 1px"><Arrow $dir="right" /></ScrollButton>
            </HScroll>
            <Corner />
          </ProfileView>
        </Dock>
        <Splitter><i /><i /><i /><i /><i /><i /></Splitter>
        <Views>
          <FunctionTitle><Fit text="spin" w={28} weight={700} /></FunctionTitle>
          <Tabs>
            {TOP_TABS.map(([text, w, tw, active], i) => (
              <Tab key={text} $w={w} $active={active} $first={i === 0}><Fit text={text} w={tw} /></Tab>
            ))}
          </Tabs>
          <TopPanel><TreeMap /></TopPanel>
          <BottomPanel>
            <PartsTable>
              <HeaderRow $off>
                <HeaderCell $w={100}><Fit text="Profile Part" w={75} /></HeaderCell>
                <HeaderCell $w={50}><Fit text="Incl." w={28} /></HeaderCell>
                <HeaderCell $w={50}><Fit text="Self" w={26} /></HeaderCell>
                <HeaderCell $w={100}><Fit text="Called" w={42} /></HeaderCell>
                <HeaderCell><Fit text="Comment" w={67} /></HeaderCell>
              </HeaderRow>
            </PartsTable>
          </BottomPanel>
          <Tabs $bottom>
            {BOTTOM_TABS.map(([text, w, tw, active], i) => (
              <Tab key={text} $w={w} $active={active} $first={i === 0} $bottom><Fit text={text} w={tw} /></Tab>
            ))}
          </Tabs>
        </Views>
      </Workspace>
      <StatusBar><Fit text="callgrind.out.13549 [1] - Total Instruction Fetch Cost: 25 745 501" w={431} /></StatusBar>

      <Pointer width="18" height="26" viewBox="0 0 18 26">
        <path d="M2.5 1.5V19L7 18.2L10 22L11.5 16L14 12.5Z" fill="#474747" stroke="#fff" strokeWidth="1" />
      </Pointer>
    </Window>
  );
}
